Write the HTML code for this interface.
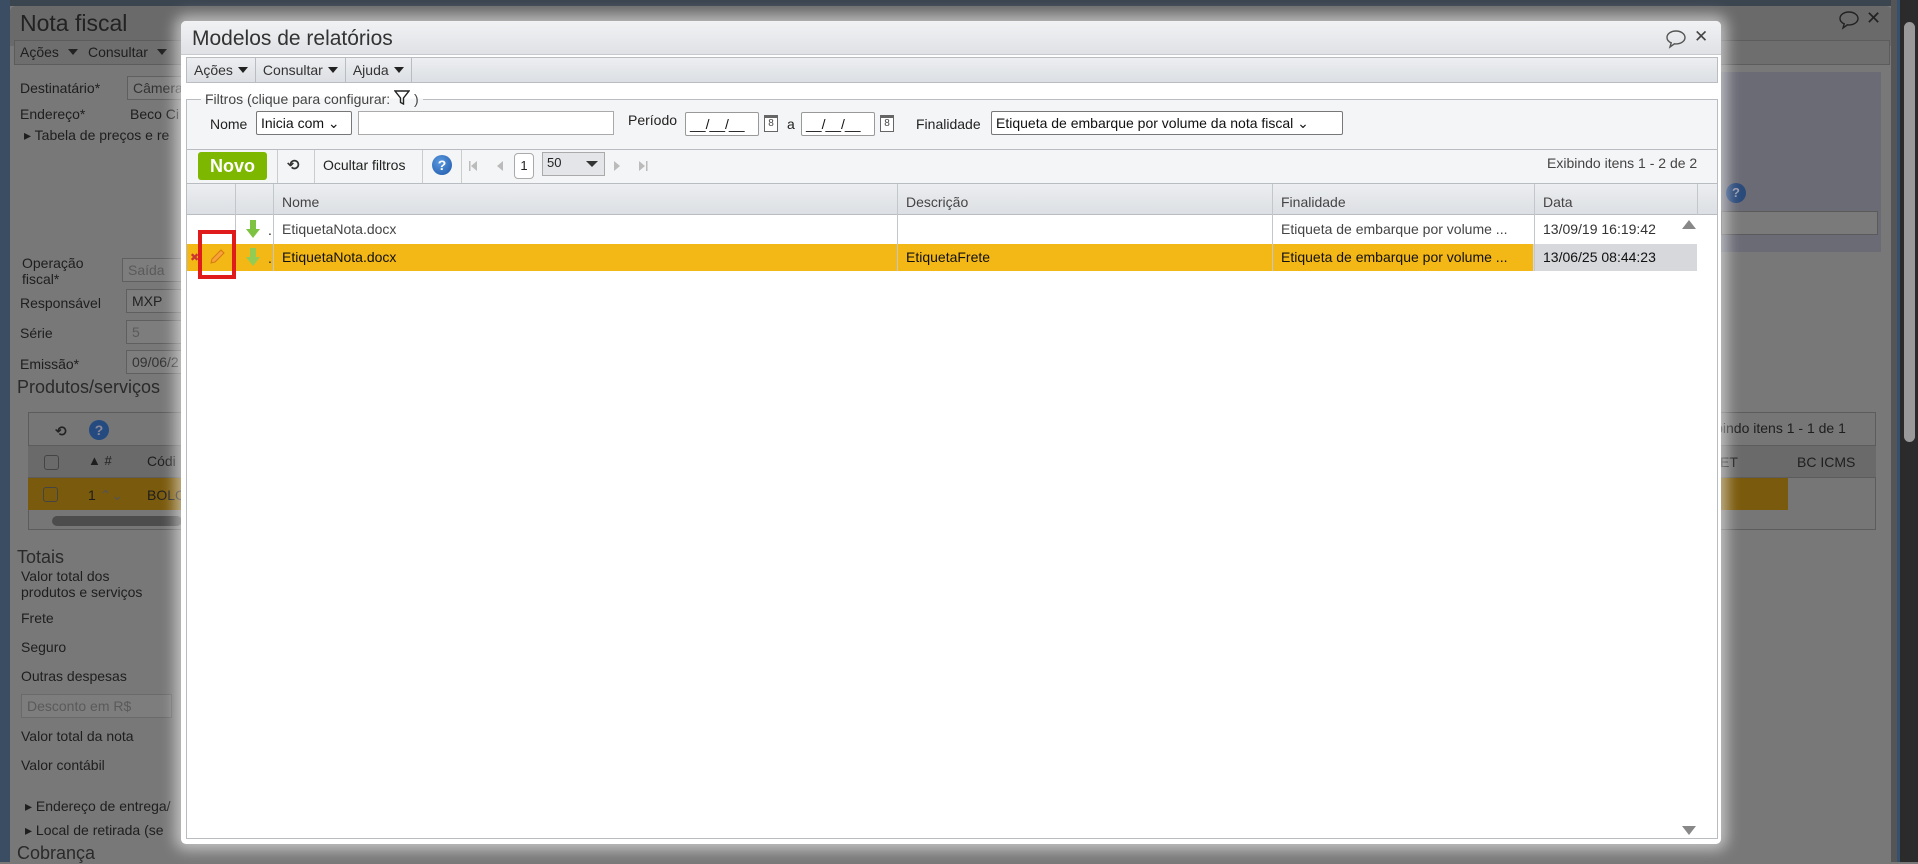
<!DOCTYPE html>
<html><head><meta charset="utf-8"><style>
*{box-sizing:border-box;margin:0;padding:0}
body{width:1918px;height:862px;overflow:hidden;position:relative;background:#787878;font-family:"Liberation Sans","DejaVu Sans",sans-serif;font-size:14px;color:#222}
.a{position:absolute}
.bg{color:#1e1e1e;font-size:14px;white-space:nowrap}
.inp{position:absolute;border:1px solid #5f5f5f;background:#7d7d7d;height:24px;font-size:14px;padding:3px 5px;color:#333}
.m{position:absolute;left:181px;top:21px;width:1540px;height:823px;background:#fff;border-radius:5px;box-shadow:0 0 14px 6px rgba(255,255,255,.55);overflow:hidden}
.tb{position:absolute;left:0;top:0;width:1540px;height:34px;background:linear-gradient(#f1f2f4,#dfe1e5);border-bottom:1px solid #c7cace}
.menu{position:absolute;left:5px;top:36px;width:1532px;height:26px;background:linear-gradient(#eceef1,#dcdfe3);border:1px solid #b9bdc2;display:flex}
.mi{height:24px;line-height:24px;padding:0 7px;border-right:1px solid #b9bdc2;color:#333;font-size:14px;white-space:nowrap}
.tri{display:inline-block;width:0;height:0;border-left:5px solid transparent;border-right:5px solid transparent;border-top:6px solid #222;margin-left:5px;vertical-align:2px}
.sel{position:absolute;height:24px;border:1px solid #777;background:#fff;border-radius:2px;font-size:14px;padding:3px 4px;color:#111;white-space:nowrap}
.col{position:absolute;top:0;height:100%;border-left:1px solid #c3c6ca}
.hd{position:absolute;top:10px;font-size:14px;color:#444}
.cell{position:absolute;font-size:14px;white-space:nowrap}
.cal{position:absolute;width:14px;height:17px;border:1px solid #666;border-top-width:3px;font-size:10px;text-align:center;line-height:12px;color:#444;background:#fff}
</style></head><body>
<div class="a" style="left:0;top:0;width:1918px;height:6px;background:#3b4550"></div>
<div class="a" style="left:0;top:0;width:10px;height:862px;background:#3a4d63"></div>
<div class="a" style="left:10px;top:6px;width:1882px;height:40px;background:#6a6a6a;border-radius:6px 6px 0 0"></div>
<div class="a bg" style="left:20px;top:10px;font-size:23px;color:#222">Nota fiscal</div>
<svg class="a" style="left:1838px;top:10px" width="22" height="20" viewBox="0 0 22 20"><path d="M11 2C6 2 2 4.8 2 8.5c0 2.5 1.8 4.3 4.2 5.3L5 18l4.5-3.2c.5.1 1 .1 1.5.1 5 0 9-2.8 9-6.4S16 2 11 2z" fill="none" stroke="#222" stroke-width="1.4"/></svg>
<div class="a" style="left:1866px;top:8px;font-size:18px;font-weight:bold;color:#222">✕</div>
<div class="a" style="left:14px;top:40px;width:1876px;height:25px;background:#6e6e6e;border:1px solid #5c5c5c"></div>
<div class="a bg" style="left:20px;top:44px">Ações <span class="tri"></span></div>
<div class="a bg" style="left:88px;top:44px">Consultar <span class="tri"></span></div>
<div class="a" style="left:1721px;top:72px;width:160px;height:180px;background:#6b6b76"></div>
<div class="a" style="left:1726px;top:183px;width:20px;height:20px;border-radius:50%;background:#2a4a7a;color:#99a;text-align:center;font-size:13px;line-height:20px;font-weight:bold">?</div>
<div class="a" style="left:1721px;top:211px;width:157px;height:24px;border:1px solid #5a5a5a;background:#7a7a7a"></div>
<div class="a bg" style="left:20px;top:80px">Destinatário*</div>
<div class="inp" style="left:127px;top:76px;width:60px">Câmera</div>
<div class="a bg" style="left:20px;top:106px">Endereço*</div>
<div class="a bg" style="left:130px;top:106px">Beco Ci</div>
<div class="a bg" style="left:24px;top:127px">▸ Tabela de preços e re</div>
<div class="a bg" style="left:22px;top:255px;line-height:16px">Operação<br>fiscal*</div>
<div class="inp" style="left:122px;top:258px;width:60px;color:#5a5a5a">Saída</div>
<div class="a bg" style="left:20px;top:295px">Responsável</div>
<div class="inp" style="left:126px;top:289px;width:60px;color:#222">MXP</div>
<div class="a bg" style="left:20px;top:325px">Série</div>
<div class="inp" style="left:126px;top:320px;width:60px;color:#5a5a5a">5</div>
<div class="a bg" style="left:20px;top:356px">Emissão*</div>
<div class="inp" style="left:126px;top:350px;width:60px">09/06/2</div>
<div class="a bg" style="left:17px;top:377px;font-size:18px;color:#2a2a2a">Produtos/serviços</div>
<div class="a" style="left:28px;top:412px;width:1848px;height:118px;border:1px solid #5c5c5c;background:#767676"></div>
<div class="a" style="left:28px;top:445px;width:1848px;height:33px;background:#6a6a6a;border-top:1px solid #5c5c5c;border-bottom:1px solid #5c5c5c"></div>
<div class="a" style="left:28px;top:478px;width:1760px;height:32px;background:#7a5a0c"></div>
<div class="a" style="left:55px;top:423px;font-weight:bold;color:#222">⟲</div>
<div class="a" style="left:89px;top:420px;width:20px;height:20px;border-radius:50%;background:#244a80;color:#889;text-align:center;line-height:20px;font-weight:bold">?</div>
<div class="a bg" style="left:88px;top:453px;font-size:13px">▲ #</div>
<div class="a bg" style="left:147px;top:453px">Códi</div>
<div class="a bg" style="left:88px;top:487px">1 <span style="color:#555">⌃⌄</span></div>
<div class="a bg" style="left:147px;top:487px">BOLO</div>
<div class="a" style="left:44px;top:455px;width:15px;height:15px;border:1px solid #444;border-radius:3px"></div>
<div class="a" style="left:43px;top:487px;width:15px;height:15px;border:1px solid #444;border-radius:3px"></div>
<div class="a" style="left:52px;top:516px;width:130px;height:10px;border-radius:5px;background:#4c4c4c"></div>
<div class="a bg" style="left:1712px;top:420px">ibindo itens 1 - 1 de 1</div>
<div class="a bg" style="left:1720px;top:454px">ET</div>
<div class="a bg" style="left:1797px;top:454px">BC ICMS</div>
<div class="a bg" style="left:17px;top:547px;font-size:18px;color:#2a2a2a">Totais</div>
<div class="a bg" style="left:21px;top:568px;line-height:16px">Valor total dos<br>produtos e serviços</div>
<div class="a bg" style="left:21px;top:610px">Frete</div>
<div class="a bg" style="left:21px;top:639px">Seguro</div>
<div class="a bg" style="left:21px;top:668px">Outras despesas</div>
<div class="inp" style="left:21px;top:694px;width:151px;color:#5a5a5a;border-color:#6a6a6a">Desconto em R$</div>
<div class="a bg" style="left:21px;top:728px">Valor total da nota</div>
<div class="a bg" style="left:21px;top:757px">Valor contábil</div>
<div class="a bg" style="left:25px;top:798px">▸ Endereço de entrega/</div>
<div class="a bg" style="left:25px;top:822px">▸ Local de retirada (se</div>
<div class="a bg" style="left:17px;top:843px;font-size:18px;color:#2a2a2a">Cobrança</div>
<div class="a" style="left:1891px;top:0;width:6px;height:862px;background:#555"></div>
<div class="a" style="left:1897px;top:0;width:3px;height:862px;background:#34506e"></div>
<div class="a" style="left:1900px;top:0;width:18px;height:862px;background:#2b2b2b"></div>
<div class="a" style="left:1904px;top:22px;width:11px;height:420px;border-radius:6px;background:#9a9a9a"></div>

<div class="m">
 <div class="tb"></div>
 <div class="a" style="left:11px;top:6px;font-size:21px;color:#333">Modelos de relatórios</div>
 <svg class="a" style="left:1484px;top:8px" width="22" height="20" viewBox="0 0 22 20"><path d="M11 2C6 2 2 4.8 2 8.5c0 2.5 1.8 4.3 4.2 5.3L5 18l4.5-3.2c.5.1 1 .1 1.5.1 5 0 9-2.8 9-6.4S16 2 11 2z" fill="none" stroke="#555" stroke-width="1.4"/></svg>
 <div class="a" style="left:1513px;top:6px;font-size:17px;font-weight:bold;color:#444">✕</div>
 <div class="menu"><div class="mi">Ações<span class="tri"></span></div><div class="mi">Consultar<span class="tri"></span></div><div class="mi">Ajuda<span class="tri"></span></div></div>
 <div class="a" style="left:5px;top:78px;width:1532px;height:66px;border:1px solid #b9bdc2;background:#f4f5f6"></div>
 <div class="a" style="left:20px;top:69px;padding:0 4px;color:#444;font-size:14px;background:linear-gradient(#fff 50%,#f4f5f6 50%)">Filtros (clique para configurar: <svg width="16" height="15" viewBox="0 0 16 15" style="vertical-align:-1px"><path d="M1 1h14L9.5 8v6l-3-1.5V8z" fill="none" stroke="#222" stroke-width="1.4"/></svg> )</div>
 <div class="a" style="left:29px;top:95px;font-size:14px">Nome</div>
 <div class="sel" style="left:75px;top:90px;width:96px">Inicia com ⌄</div>
 <div class="a" style="left:177px;top:90px;width:256px;height:24px;border:1px solid #aaa;background:#fff"></div>
 <div class="a" style="left:447px;top:91px">Período</div>
 <div class="sel" style="left:504px;top:91px;width:74px;border-color:#999">__/__/__</div>
 <div class="cal" style="left:583px;top:94px">8</div>
 <div class="a" style="left:606px;top:95px">a</div>
 <div class="sel" style="left:620px;top:91px;width:74px;border-color:#999">__/__/__</div>
 <div class="cal" style="left:699px;top:94px">8</div>
 <div class="a" style="left:735px;top:95px">Finalidade</div>
 <div class="sel" style="left:810px;top:90px;width:352px">Etiqueta de embarque por volume da nota fiscal ⌄</div>
 <div class="a" style="left:5px;top:128px;width:1532px;height:35px;border:1px solid #b9bdc2;background:#f4f5f6"></div>
 <div class="a" style="left:17px;top:131px;width:69px;height:28px;background:#7db700;border-radius:3px;color:#fff;font-weight:bold;font-size:18px;text-align:center;line-height:28px">Novo</div>
 <div class="a" style="left:96px;top:129px;height:33px;border-left:1px solid #ccc"></div>
 <div class="a" style="left:106px;top:135px;font-weight:bold;font-size:15px;color:#333">⟲</div>
 <div class="a" style="left:133px;top:129px;height:33px;border-left:1px solid #ccc"></div>
 <div class="a" style="left:142px;top:136px">Ocultar filtros</div>
 <div class="a" style="left:241px;top:129px;height:33px;border-left:1px solid #ccc"></div>
 <div class="a" style="left:251px;top:134px;width:20px;height:20px;border-radius:50%;background:radial-gradient(circle at 40% 35%,#5a9ae0,#1d56a8);color:#fff;font-weight:bold;text-align:center;line-height:20px;font-size:14px">?</div>
 <div class="a" style="left:280px;top:129px;height:33px;border-left:1px solid #ccc"></div>
 <svg class="a" style="left:287px;top:139px" width="40" height="12" viewBox="0 0 40 12"><rect x="1" y="1" width="1.5" height="10" fill="#bbb"/><path d="M9 1v10L3 6z" fill="#bbb"/><path d="M35 1v10l-6-5z" fill="#bbb"/></svg>
 <div class="a" style="left:333px;top:132px;width:20px;height:26px;border:1px solid #aaa;border-radius:4px;background:#fff;text-align:center;line-height:24px;font-size:13px">1</div>
 <div class="a" style="left:361px;top:131px;width:63px;height:24px;border:1px solid #aaa;background:#e3e5e8;padding:2px 4px;font-size:13px">50<span style="position:absolute;right:6px;top:8px;border-left:6px solid transparent;border-right:6px solid transparent;border-top:6px solid #333"></span></div>
 <svg class="a" style="left:432px;top:139px" width="40" height="12" viewBox="0 0 40 12"><path d="M1 1v10l6-5z" fill="#bbb"/><path d="M26 1v10l6-5z" fill="#bbb"/><rect x="33" y="1" width="1.5" height="10" fill="#bbb"/></svg>
 <div class="a" style="left:1366px;top:134px;color:#444">Exibindo itens 1 - 2 de 2</div>
 <div class="a" style="left:5px;top:162px;width:1532px;height:656px;border:1px solid #b9bdc2;background:#fff">
  <div class="a" style="left:0;top:0;width:1530px;height:31px;background:linear-gradient(#eceef1,#dcdfe3);border-bottom:1px solid #b9bdc2"></div>
  <div class="a" style="left:0;top:60px;width:1510px;height:27px;background:#f3b815"></div>
  <div class="a" style="left:1346px;top:60px;width:164px;height:27px;background:#d6d8dc"></div>
  <div class="col" style="left:48px;height:87px"></div>
  <div class="col" style="left:86px;height:87px"></div>
  <div class="col" style="left:710px;height:87px"></div>
  <div class="col" style="left:1085px;height:87px"></div>
  <div class="col" style="left:1347px;height:87px"></div>
  <div class="col" style="left:1510px;height:31px"></div>
  <div class="hd" style="left:95px">Nome</div>
  <div class="hd" style="left:719px">Descrição</div>
  <div class="hd" style="left:1094px">Finalidade</div>
  <div class="hd" style="left:1356px">Data</div>
  <div class="cell" style="left:95px;top:37px;color:#444">EtiquetaNota.docx</div>
  <div class="cell" style="left:1094px;top:37px;color:#444">Etiqueta de embarque por volume ...</div>
  <div class="cell" style="left:1356px;top:37px;color:#333">13/09/19 16:19:42</div>
  <div class="cell" style="left:95px;top:65px;color:#111">EtiquetaNota.docx</div>
  <div class="cell" style="left:719px;top:65px;color:#111">EtiquetaFrete</div>
  <div class="cell" style="left:1094px;top:65px;color:#111">Etiqueta de embarque por volume ...</div>
  <div class="cell" style="left:1356px;top:65px;color:#111">13/06/25 08:44:23</div>
  <svg class="a" style="left:58px;top:35px" width="16" height="20" viewBox="0 0 16 20"><path d="M5 1h6v9h4l-7 9-7-9h4z" fill="#7ec242"/></svg>
  <svg class="a" style="left:58px;top:63px" width="16" height="20" viewBox="0 0 16 20"><path d="M5 1h6v9h4l-7 9-7-9h4z" fill="#93cc55"/></svg>
  <div class="cell" style="left:81px;top:38px">.</div><div class="cell" style="left:81px;top:66px">.</div>
  <div class="cell" style="left:3px;top:67px;color:#c33;font-size:11px;font-weight:bold">✖</div>
  <svg class="a" style="left:21px;top:64px" width="18" height="18" viewBox="0 0 18 18"><path d="M3 15l1-4 9-9 3 3-9 9z" fill="#f7a23a" stroke="#d77a10" stroke-width="1"/></svg>
  <div class="a" style="left:1495px;top:36px;border-left:7px solid transparent;border-right:7px solid transparent;border-bottom:9px solid #888"></div>
  <div class="a" style="left:1495px;top:642px;border-left:7px solid transparent;border-right:7px solid transparent;border-top:9px solid #888"></div>
 </div>
 <div class="a" style="left:17px;top:209px;width:38px;height:49px;border:4px solid #e01b1b"></div>
</div>
</body></html>
